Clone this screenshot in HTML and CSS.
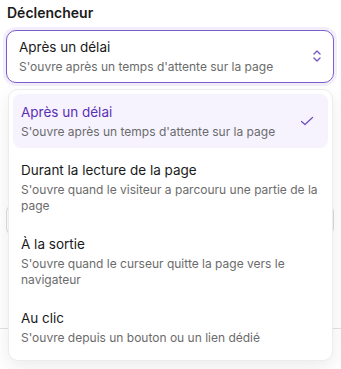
FILE: index.html
```html
<!DOCTYPE html>
<html lang="fr">
<head>
    <meta charset="UTF-8">
    <meta name="viewport" content="width=device-width, initial-scale=1.0">
    <title>Déclencheur</title>
    <link rel="stylesheet" href="styles.css">
</head>
<body>
    <div class="panel">
        <div class="field">
            <label class="field-label" for="triggerSelect">Déclencheur</label>
            <div class="select-wrap">
                <button class="select-trigger" id="triggerSelect" type="button">
                    <span class="option-text">
                        <span class="option-title">Après un délai</span>
                        <span class="option-desc">S'ouvre après un temps d'attente sur la page</span>
                    </span>
                    <svg class="chevrons" width="10" height="14" viewBox="0 0 10 14" fill="none" stroke="currentColor" stroke-width="1.4" stroke-linecap="round" stroke-linejoin="round">
                        <path d="M2 5 L5 2 L8 5"/>
                        <path d="M2 9 L5 12 L8 9"/>
                    </svg>
                </button>

                <!-- open menu -->
                <ul class="select-menu">
                    <li class="option selected">
                        <span class="option-text">
                            <span class="option-title">Après un délai</span>
                            <span class="option-desc">S'ouvre après un temps d'attente sur la page</span>
                        </span>
                        <svg class="check" width="14" height="10" viewBox="0 0 14 10" fill="none" stroke="currentColor" stroke-width="1.2" stroke-linecap="round" stroke-linejoin="round">
                            <path d="M1.5 5.5 L5 8.5 L12.5 1.5"/>
                        </svg>
                    </li>
                    <li class="option">
                        <span class="option-text">
                            <span class="option-title">Durant la lecture de la page</span>
                            <span class="option-desc">S'ouvre quand le visiteur a parcouru une partie de la page</span>
                        </span>
                    </li>
                    <li class="option">
                        <span class="option-text">
                            <span class="option-title">À la sortie</span>
                            <span class="option-desc">S'ouvre quand le curseur quitte la page vers le navigateur</span>
                        </span>
                    </li>
                    <li class="option">
                        <span class="option-text">
                            <span class="option-title">Au clic</span>
                            <span class="option-desc">S'ouvre depuis un bouton ou un lien dédié</span>
                        </span>
                    </li>
                </ul>
            </div>
        </div>

        <div class="field field-next">
            <div class="input-box"></div>
        </div>
    </div>
    <div class="footer-line"></div>
</body>
</html>
```

FILE: styles.css
```css
html, body {
    min-height: 369px;
}
body {
    margin: 0;
    font-family: Inter, "Noto Sans", sans-serif;
    color: #1a1a1a;
    background-color: #fff;
}
.panel {
    padding: 4px 7px 0 6px;
}
.field-label {
    display: block;
    font-size: 14px;
    font-weight: 600;
    line-height: 18px;
    padding-left: 1px;
    margin-bottom: 8px;
}
.select-wrap {
    position: relative;
}
.select-trigger {
    width: 100%;
    display: flex;
    align-items: center;
    justify-content: space-between;
    text-align: left;
    font-family: inherit;
    background-color: #fff;
    border: 1.5px solid #7d5fcb;
    border-radius: 10px;
    box-shadow: 0 0 0 3px rgba(125, 95, 203, 0.1);
    padding: 6px 12px 7px 12px;
    cursor: pointer;
}
.option-text {
    display: flex;
    flex-direction: column;
}
.option-title {
    font-size: 13.5px;
    line-height: 20px;
    color: #1a1a1a;
}
.option-desc {
    font-size: 12px;
    line-height: 16px;
    margin-top: 2px;
    color: #6b6b6b;
}
.chevrons {
    color: #7357c2;
    margin-right: -1px;
    flex-shrink: 0;
}
.select-menu {
    position: absolute;
    top: calc(100% + 6px);
    left: 2px;
    right: 1px;
    margin: 0;
    padding: 4px 4px 6px;
    list-style: none;
    background-color: #fff;
    border: 1px solid #ececec;
    border-radius: 10px;
    box-shadow: 0 6px 18px rgba(0, 0, 0, 0.08);
    display: flex;
    flex-direction: column;
    gap: 4px;
    z-index: 1;
}
.option {
    display: flex;
    align-items: center;
    justify-content: space-between;
    padding: 8px;
    border-radius: 8px;
}
.option.selected {
    background-color: #f6f3ff;
}
.option.selected .option-title {
    color: #5b2fb3;
}
.check {
    color: #6a4cbf;
    flex-shrink: 0;
    margin-right: 6px;
}
.field-next {
    margin-top: 121px;
}
.input-box {
    height: 30px;
    border: 1px solid #dcdcdc;
    border-radius: 8px;
}
.footer-line {
    margin-top: 92px;
    border-top: 1px solid #e2e2e2;
}
```
